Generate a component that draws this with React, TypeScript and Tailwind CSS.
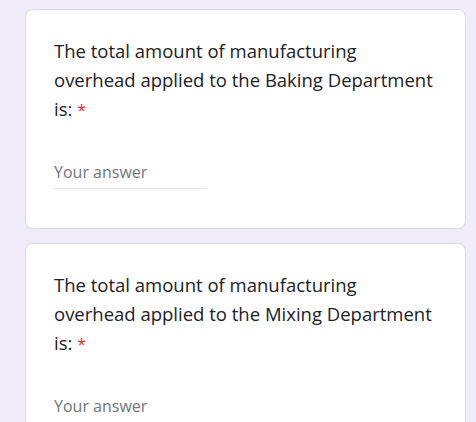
import React from 'react';

function Question({ lines }: { lines: string[] }) {
  return (
    <div className="shrink-0 bg-white rounded-lg border border-[#dadce0] pl-[28px] pr-[20px] pt-[26px] pb-[39px]">
      <div className="text-[18.5px] leading-[29px] text-[#202124]">
        {lines.map((line, i) => (
          <div key={i}>
            {line}
            {i === lines.length - 1 && <span className="ml-[5px] text-[16px] text-[#d93025]">*</span>}
          </div>
        ))}
      </div>
      <div className="mt-[35px] w-[153px] border-b border-[#e0e0e0] pb-[4px]">
        <span className="block text-[16px] leading-6 text-[#70757a]">Your answer</span>
      </div>
    </div>
  );
}

export default function App() {
  return (
    <div
      className="h-screen overflow-hidden bg-[#f0ebf8] pt-[9px] pl-[25px] pr-[10px] flex flex-col gap-[14px]"
      style={{ fontFamily: '"Open Sans", Roboto, sans-serif' }}
    >
      <Question lines={['The total amount of manufacturing', 'overhead applied to the Baking Department', 'is:']} />
      <Question lines={['The total amount of manufacturing', 'overhead applied to the Mixing Department', 'is:']} />
    </div>
  );
}
